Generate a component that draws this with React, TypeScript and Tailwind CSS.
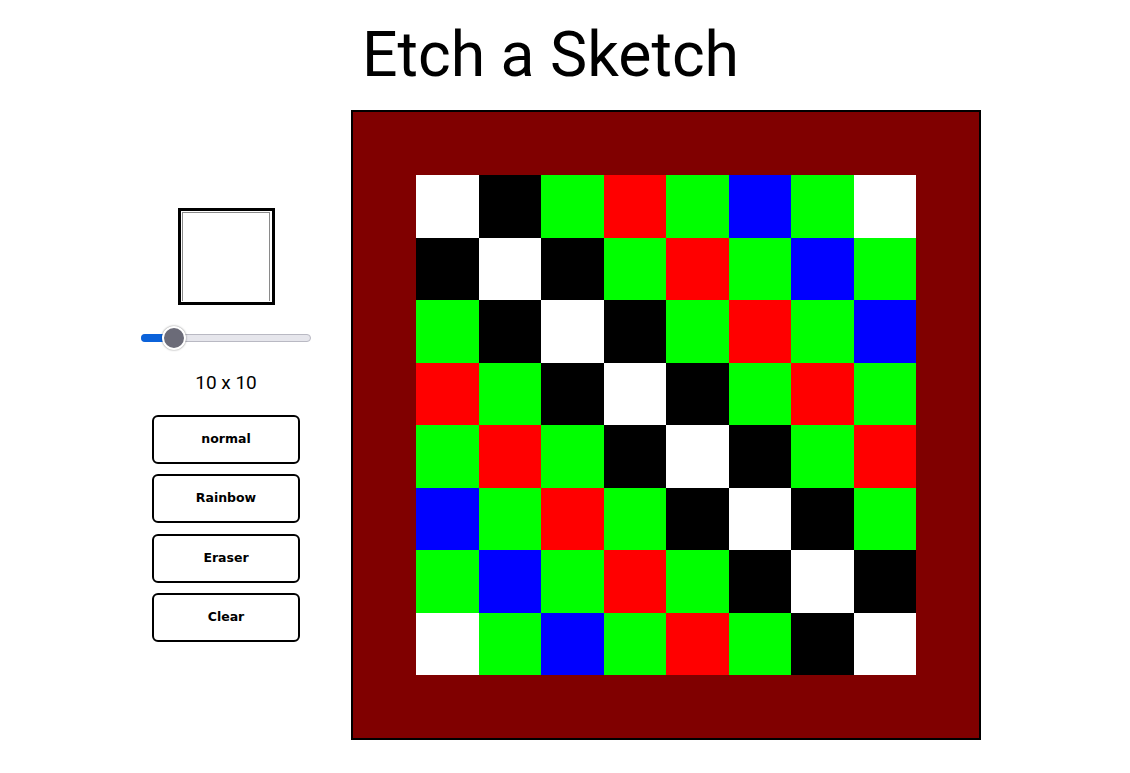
import React from "react";

const W = "#ffffff", K = "#000000", G = "#00ff00", R = "#ff0000", B = "#0000ff";
const rows: string[][] = [
  [W, K, G, R, G, B, G, W],
  [K, W, K, G, R, G, B, G],
  [G, K, W, K, G, R, G, B],
  [R, G, K, W, K, G, R, G],
  [G, R, G, K, W, K, G, R],
  [B, G, R, G, K, W, K, G],
  [G, B, G, R, G, K, W, K],
  [W, G, B, G, R, G, K, W],
];

export default function App() {
  const labels = ["normal", "Rainbow", "Eraser", "Clear"];
  return (
    <div className="w-[1130px] h-[773px] bg-white" style={{ fontFamily: "Roboto, sans-serif" }}>
      <h1 className="pt-[19px] pl-[362px] text-[62.5px] leading-[72px] text-black font-normal">Etch a Sketch</h1>
      <div className="flex items-center pl-[141px] mt-[19px]">
        <div className="w-[170px] flex flex-col items-center">
          <div className="w-[97px] h-[97px] border-[3px] border-black bg-white pt-[1px] pl-[1px] pr-[2px] pb-[1px]">
            <div className="w-full h-full border-t border-l border-r border-[#8a8a8a] bg-white" />
          </div>
          <div className="relative w-[170px] h-[24px] mt-[21px]">
            <div className="absolute left-0 right-0 top-[8px] h-[8px] rounded-full bg-[#e6e6ec] border border-[#b9b9c3]" />
            <div className="absolute left-0 w-[34px] top-[8px] h-[8px] rounded-full bg-[#0b62da]" />
            <div className="absolute left-[21px] top-0 w-[24px] h-[24px] rounded-full bg-[#6b6b78] border-[2px] border-white shadow-[0_0_2px_rgba(0,0,0,0.5)]" />
          </div>
          <div className="mt-[22px] text-[19px] leading-[22px] text-black">10 x 10</div>
          <div className="mt-[21px] flex flex-col gap-[10.5px]">
            {labels.map((l) => (
              <button
                key={l}
                className="w-[148px] h-[49px] border-2 border-black rounded-[6px] bg-white text-[12.5px] font-bold text-black"
                style={{ fontFamily: "'DejaVu Sans', Verdana, sans-serif" }}
              >
                {l}
              </button>
            ))}
          </div>
        </div>
        <div className="ml-[40px] w-[630px] h-[630px] border-2 border-black bg-[#800000] p-[63px]">
          <div className="grid grid-cols-8 w-[500px] h-[500px]">
            {rows.flat().map((c, i) => (
              <div key={i} style={{ backgroundColor: c }} />
            ))}
          </div>
        </div>
      </div>
    </div>
  );
}
